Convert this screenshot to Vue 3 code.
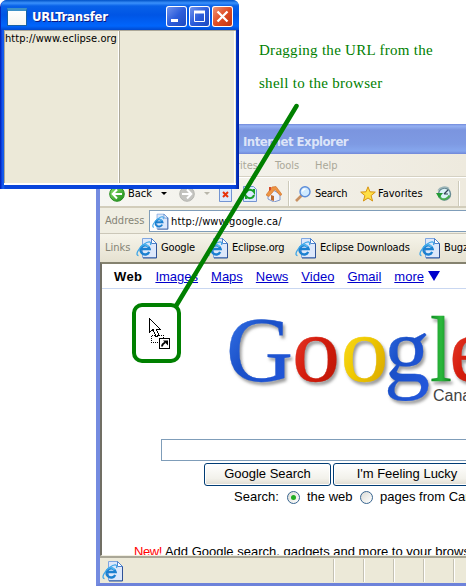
<script setup>
const pageLinks = ['Images', 'Maps', 'News', 'Video', 'Gmail', 'more']
const bookmarks = ['Google', 'Eclipse.org', 'Eclipse Downloads', 'Bugzilla']
const logo = [
  { ch: 'G', x: 226, w: 67, fill: 'url(#blue)' },
  { ch: 'o', x: 292, w: 48, fill: 'url(#red)' },
  { ch: 'o', x: 340.5, w: 48, fill: 'url(#yellow)' },
  { ch: 'g', x: 384, w: 46, fill: 'url(#blue)' },
  { ch: 'l', x: 430, w: 22, fill: 'url(#green)' },
  { ch: 'e', x: 449, w: 43, fill: 'url(#red)' },
]
</script>

<template>
  <main class="canvas">
    <svg class="defs" width="0" height="0">
      <symbol id="ie" viewBox="0 0 22 22">
        <path d="M6.500 1.500h9l5 5v14h-14z" fill="#dde8fb" stroke="#7fa6e0" />
        <path d="M20.500 6v15H7" fill="none" stroke="#2f5297" />
        <path d="M15.500 1.500v5h5z" fill="#fff" stroke="#4f82cc" />
        <path d="M13.200 15A4.600 4.600 0 1 1 13.600 12H5" fill="none" stroke="#1c80d0" stroke-width="2.400" />
        <path d="M12.500 10A4.400 4.400 0 0 0 4.800 9.800" fill="none" stroke="#5cc4f7" stroke-width="1.200" />
        <path d="M2.500 18.500C-1 18.500 2 11.500 7.500 7.500s8-3 7 .5" fill="none" stroke="#3fa6e8" stroke-width="1.300" />
      </symbol>
    </svg>

    <section class="browser">
      <header class="browser-title"><span>Internet Explorer</span></header>
      <nav class="menu"><span class="fav-menu">Favorites</span><span>Tools</span><span>Help</span></nav>
      <div class="toolbar">
        <svg class="back" width="16" height="16" viewBox="0 0 16 16"><circle cx="8" cy="8" r="7.300" fill="url(#go)" stroke="#278b20" /><path d="M13 8H4M8 3.500 3.700 8 8 12.500" fill="none" stroke="#fff" stroke-width="2" /></svg>
        <span class="t-back">Back</span>
        <i class="drop"></i>
        <svg width="16" height="16" viewBox="0 0 16 16"><circle cx="8" cy="8" r="7.300" fill="#c4c4c0" stroke="#b5b5b0" /><path d="M3 8h9M8 3.500 12.300 8 8 12.500" fill="none" stroke="#fff" stroke-width="2" /></svg>
        <i class="drop off"></i>
        <svg width="13" height="16" viewBox="0 0 13 16"><path d="M.5.500h9l3 3v12H.500z" fill="#dceaff" stroke="#7394d2" /><path d="m4 6 5 5m0-5-5 5" stroke="#e8320c" stroke-width="2" /></svg>
        <svg width="14" height="16" viewBox="0 0 14 16"><path d="M.5.500h10l3 3v12H.500z" fill="#dceaff" stroke="#7394d2" /><path d="M3 7c1-4 6-4 8-1V3M11 9c-1 4-6 4-8 1v3" fill="none" stroke="#16a026" stroke-width="2" /></svg>
        <svg width="16" height="16" viewBox="0 0 16 16"><path d="m2 8 5-4 7 4v6l-6 2-6-3z" fill="#eef1fa" stroke="#8098cc" /><path d="m0 9 6-8 4-.500 6 8-2 1-5-6-6 7z" fill="#ee9443" stroke="#cf6b25" stroke-width=".6" /><path d="M5 9v5l3 1v-5z" fill="#bd6a32" /><path d="M3 1h2v3L3 5z" fill="#d64b2b" /></svg>
        <b class="rule"></b>
        <svg width="16" height="16" viewBox="0 0 16 16"><path d="m7 9-6 6" stroke="#c89062" stroke-width="2.600" /><circle cx="10" cy="5.800" r="5" fill="#cfeaff" stroke="#5c8cd8" stroke-width="1.400" /><path d="M7.500 5.500a3 3 0 0 1 3-2.500" fill="none" stroke="#fff" stroke-width="1.500" /></svg>
        <span class="t-search">Search</span>
        <svg width="16" height="16" viewBox="0 0 16 16"><path d="m8 .8 2 5 5.300.300-4.200 3.500 1.500 5.400L8 12l-4.600 3 1.500-5.400L.7 6.100 6 5.800z" fill="#ffdf45" stroke="#d79412" /></svg>
        <span class="t-fav">Favorites</span>
        <svg width="16" height="16" viewBox="0 0 16 16"><circle cx="8.500" cy="8" r="6" fill="#dcf3f7" stroke="#698b95" stroke-width="1.500" /><path d="M8 8 12 4M8 8h4" stroke="#345" stroke-width="1.200" /><path d="M2 4.500c2-3.500 8-4.500 11-2" fill="none" stroke="#9bb5b8" stroke-width="1.500" /><path d="M2.500 8.500 5 12.500c3 2 7 0 8.500-3" fill="none" stroke="#46ac4e" stroke-width="2" /><path d="M0 7h7l-4 5z" fill="#239b36" /></svg>
        <b class="rule"></b>
      </div>
      <div class="address">
        <span class="label">Address</span>
        <div class="address-box"><svg width="17" height="17"><use href="#ie" /></svg><span>http://www.google.ca/</span></div>
      </div>
      <div class="links">
        <span class="label">Links</span>
        <span v-for="b in bookmarks" :key="b" class="bookmark"><svg width="22" height="22"><use href="#ie" /></svg><em>{{ b }}</em></span>
      </div>

      <div class="page">
        <nav class="page-nav">
          <strong>Web</strong>
          <a v-for="l in pageLinks" :key="l">{{ l }}</a>
          <svg width="12" height="10" viewBox="0 0 12 10"><path d="M0 0h12L6 10z" fill="#0000cc" /></svg>
        </nav>
        <svg class="logo" width="364" height="150" viewBox="102 289 364 150">
          <defs>
            <linearGradient id="blue" x2="1" y2="1"><stop stop-color="#3c7cf0" /><stop offset=".45" stop-color="#1a50c8" /><stop offset="1" stop-color="#2458df" /></linearGradient>
            <linearGradient id="red" x2="1" y2="1"><stop stop-color="#f04c3c" /><stop offset=".5" stop-color="#d41c0c" /><stop offset="1" stop-color="#b71505" /></linearGradient>
            <linearGradient id="yellow" x2="1" y2="1"><stop stop-color="#ffe32e" /><stop offset=".5" stop-color="#efc900" /><stop offset="1" stop-color="#d39e00" /></linearGradient>
            <linearGradient id="green" x2="1"><stop stop-color="#0c8c20" /><stop offset=".5" stop-color="#2cb83c" /><stop offset="1" stop-color="#087b18" /></linearGradient>
            <linearGradient id="go" x2="1" y2="1"><stop stop-color="#91e46b" /><stop offset="1" stop-color="#168a17" /></linearGradient>
          </defs>
          <g class="logo-letters">
            <text v-for="(l, i) in logo" :key="i" :x="l.x" y="380.500" :textLength="l.w" lengthAdjust="spacingAndGlyphs" :fill="l.fill" :stroke="l.fill">{{ l.ch }}</text>
          </g>
          <text class="country" x="433" y="401">Canada</text>
        </svg>
        <div class="query"></div>
        <div class="buttons"><span class="btn search-btn">Google Search</span><span class="btn lucky">I'm Feeling Lucky</span></div>
        <div class="scope">
          <span class="s-label">Search:</span><i class="radio on"></i><span class="s-web">the web</span><i class="radio"></i><span class="s-pages">pages from Canada</span>
        </div>
        <p class="promo"><span>New!</span> Add Google search, gadgets and more to your browser</p>
      </div>

      <footer class="status">
        <svg width="22" height="22"><use href="#ie" /></svg>
        <div class="cells"><i v-for="n in 5" :key="n"></i></div>
      </footer>
    </section>

    <section class="shell">
      <header class="shell-title">
        <span class="app-icon"></span>
        <span class="shell-name">URLTransfer</span>
        <span class="ctl"><svg width="21" height="21" viewBox="0 0 21 21"><path d="M5 14.500h7" stroke="#fff" stroke-width="3" /></svg></span>
        <span class="ctl"><svg width="21" height="21" viewBox="0 0 21 21"><path d="M5.500 6v9.500h10V6" fill="none" stroke="#fff" /><path d="M5 6h11" stroke="#fff" stroke-width="3" /></svg></span>
        <span class="ctl close"><svg width="21" height="21" viewBox="0 0 21 21"><path d="m5.500 5.500 10 10m0-10-10 10" stroke="#fff" stroke-width="2.300" /></svg></span>
      </header>
      <div class="shell-body"><div class="pane"><span>http://www.eclipse.org</span></div><div class="pane second"></div></div>
    </section>

    <p class="note">Dragging the URL from the<br />shell to the browser</p>
    <svg class="callout" width="466" height="586" viewBox="0 0 466 586">
      <path d="M296.500 106 176 306" fill="none" stroke="#008000" stroke-width="4.500" stroke-linecap="round" />
      <rect x="134" y="305" width="45" height="56" rx="8" fill="none" stroke="#008000" stroke-width="4" />
      <g shape-rendering="crispEdges">
        <path d="M149.500 318.500v14l3.500-3 3 7 3-1-3-6.500h4z" fill="#fff" stroke="#000" />
        <path d="M155 335.500h-3.500v7H159M159 335.500h4.500v3" fill="none" stroke="#000" stroke-dasharray="1 1" />
        <path d="M159.500 338.500h10v10h-10z" fill="#fff" stroke="#000" />
      </g>
      <path d="M162 346.500c0-2 1-3 3-4" fill="none" stroke="#000" stroke-width="1.800" /><path d="M163 340.500h5v5z" />
    </svg>
  </main>
</template>

<style>
body { margin: 0; background: #fff; }
</style>

<style scoped>
.canvas { position: relative; width: 466px; height: 586px; overflow: hidden; background: #fff; color: #000; font: 11px/14px "DejaVu Sans Condensed", "DejaVu Sans", sans-serif; white-space: nowrap; }
.canvas * { box-sizing: border-box; }
.defs { position: absolute; }
svg { display: block; flex: none; }
.browser { position: absolute; left: 96px; top: 124px; width: 370px; height: 462px; overflow: hidden; background: #f0eee2; border-left: 4px solid #748be0; border-bottom: 3px solid #6d82da; display: grid; grid-template-rows: 30px 23px 31px 25px 29px 294px 27px; grid-template-columns: 366px; }
.browser-title { background: linear-gradient(#7189da 0, #94b0f2 2px, #7b95df 6px, #7e9ae3 20px, #86a7ee 27px, #7188d9); padding: 10px 0 0 143px; color: #dce4f8; font: bold 13px/15px "DejaVu Sans Condensed", sans-serif; letter-spacing: -.48px; }
.menu { display: grid; grid-template-columns: 175px 40px 60px; color: #aaa899; padding-top: 5px; border-bottom: 1px solid #d5d1c3; background: linear-gradient(90deg, #f6f6f2, #eeeade); }
.fav-menu { text-align: right; padding-right: 17px; }
.toolbar { display: grid; grid-template-columns: 19px 33px 18px 25px 15px 24px 23px 22px 7px 20px 45px 18px 58px 22px 2px; align-items: center; padding: 3px 0 0 9px; border-top: 1px solid #fff; border-bottom: 2px solid #d2cdbb; background: linear-gradient(90deg, #f6f6f2, #eeeade); }
.t-search { letter-spacing: -.3px; }
.drop { border: 3px solid transparent; border-top-color: #000; border-bottom: 0; width: 6px; }
.off { border-top-color: #b8b6aa; }
.rule { width: 2px; height: 25px; border-left: 1px solid #cdcaba; border-right: 1px solid #fff; }
.address { display: grid; grid-template-columns: 44px 317px; padding: 2px 0 1px 5px; align-items: center; }
.label { color: #858476; }
.address-box { height: 22px; border: 1px solid #7f9db9; border-right: 0; background: #fff; display: flex; align-items: center; gap: 2px; padding: 1px 0 0 2px; letter-spacing: .12px; }
.links { display: grid; grid-template-columns: 31px 71px 88px 124px 47px; align-items: center; padding-left: 5px; border-top: 1px solid #cbc7b8; background: linear-gradient(#f6f4ea, #e5e1d0); overflow: hidden; }
.bookmark { display: flex; align-items: center; gap: 3px; letter-spacing: -.15px; }
em { font-style: normal; }
.page { background: #fff; border-left: 2px solid #716f64; border-top: 2px solid #85826f; border-bottom: 1px solid #f1efe2; overflow: hidden; font: 13px/16px "Liberation Sans", Arial, sans-serif; display: grid; grid-template-rows: 25px 150px 22px 26px 22px 46px; grid-template-columns: 364px; }
.page-nav { display: flex; padding: 5px 0 0 12px; border-bottom: 1px solid #c9d7f1; gap: 13px; }
.page-nav a { color: #0000cc; text-decoration: underline; }
.page-nav svg { margin: 2px 0 0 -9px; }
.page-nav strong { letter-spacing: .4px; }
.logo { overflow: hidden; }
.logo-letters { font: 94px "Liberation Serif", serif; filter: drop-shadow(2px 3px 1.500px rgba(60, 60, 60, .5)); stroke-width: .3; }
.country { font: 16px "Liberation Sans", sans-serif; fill: #444; }
.query { margin-left: 59px; border: 1px solid #7f9db9; border-right: 0; }
.buttons { display: grid; grid-template-columns: 127px 150px; gap: 2px; padding: 2px 0 1px 102px; }
.btn { border: 1px solid #003c74; border-radius: 3px; box-shadow: inset 0 0 0 1px #fff; background: linear-gradient(#fff, #f2f1ea 70%, #dedbd1); text-align: center; line-height: 20px; height: 23px; }
.lucky { padding-right: 2px; }
.scope { display: grid; grid-template-columns: 53px 20px 53px 20px 150px; padding-left: 132px; align-items: center; height: 20px; }
.radio { width: 13px; height: 13px; border: 1px solid #386590; border-radius: 50%; background: linear-gradient(135deg, #dcdcd6, #fff); display: grid; place-items: center; }
.on::after { content: ""; width: 5px; height: 5px; border-radius: 50%; background: #22ad22; }
.promo { margin: 0; padding: 35px 0 0 32px; }
.promo span { color: #f00; letter-spacing: -.4px; }
.status { display: flex; justify-content: space-between; border-top: 2px solid #aaa797; padding: 2px 0 2px 2px; background: #ece9d8; }
.cells { display: flex; }
.cells i { width: 30px; margin: -1px 0; border-left: 1px solid #c4c1b2; box-shadow: inset 1px 0 #fff; }
.cells i:last-child { width: 13px; }
.shell { position: absolute; left: 0; top: 0; width: 239px; height: 189px; border-radius: 7px 7px 0 0; background: linear-gradient(90deg, #001ea0 0, #0831d9 1px, #1663ee 3px, #0845dc 5px, #0845dc 235px, #001ea0); padding: 0 4px 4px; display: grid; grid-template-rows: 30px 155px; }
.shell-title { background: linear-gradient(#0052c8 0, #3a91fb 3px, #0861e8 6px, #0055e5 15px, #0065fc 26px, #0049cf); margin: 0 -3px; padding: 0 6px 0 6px; display: grid; grid-template-columns: 25px 134px 23px 23px 21px; border-radius: 6px 6px 0 0; align-items: center; }
.app-icon { width: 20px; height: 18px; background: linear-gradient(#fff, #f5f5f0); border: 1px solid #1761a5; border-top: 3px solid #3d91c7; margin-top: 3px; }
.shell-name { color: #fff; font: bold 13px/15px "DejaVu Sans Condensed", sans-serif; letter-spacing: -.2px; text-shadow: 1px 1px #0a1883; margin-top: 3px; }
.ctl { width: 21px; height: 21px; margin-top: 3px; border-radius: 3px; box-shadow: inset 0 0 0 1px #fff; background: linear-gradient(135deg, #7899ef, #2c5ddb 50%, #1c47bd); }
.close { background: linear-gradient(135deg, #f09c80, #df4c24 50%, #bd3210); }
.shell-body { display: grid; grid-template-columns: 115px 116px; border-bottom: 2px solid #fff; background: #ece9d8; border-top: 1px solid #aca899; }
.pane { border-left: 1px solid #aca899; border-right: 1px solid #fff; overflow: hidden; padding-top: 1px; letter-spacing: .05px; }
.note { position: absolute; left: 259px; top: 34px; margin: 0; color: #008000; font: 15px/33px "Liberation Serif", serif; letter-spacing: .28px; }
.callout { position: absolute; left: 0; top: 0; }
</style>
